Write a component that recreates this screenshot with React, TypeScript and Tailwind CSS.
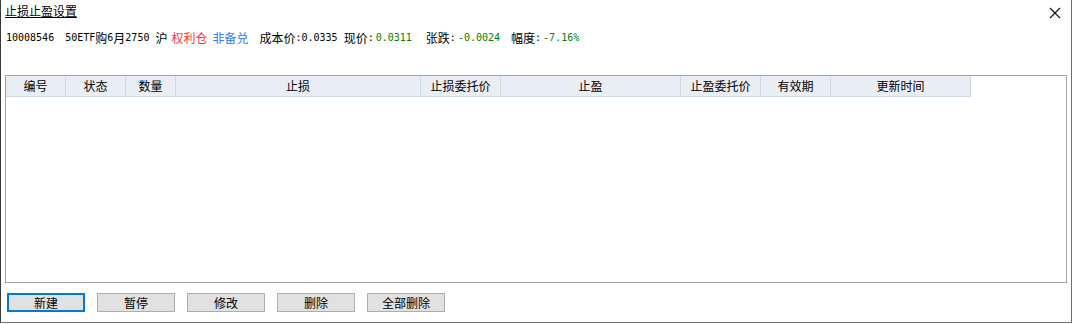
const cjk = { fontFamily: '"Noto Sans CJK SC", "Liberation Sans", sans-serif' }

const columns = [
    { label: "编号", w: "w-[60px]" },
    { label: "状态", w: "w-[60px]" },
    { label: "数量", w: "w-[50px]" },
    { label: "止损", w: "w-[245px]" },
    { label: "止损委托价", w: "w-[80px]" },
    { label: "止盈", w: "w-[180px]" },
    { label: "止盈委托价", w: "w-[80px]" },
    { label: "有效期", w: "w-[70px]" },
    { label: "更新时间", w: "w-[140px]" },
]

const buttons = ["新建", "暂停", "修改", "删除", "全部删除"]

const Num = ({ children, className = "" }: { children: string; className?: string }) => (
    <span className={`font-['DejaVu_Sans_Mono',monospace] text-[10px] ${className}`}>{children}</span>
)

export default function App() {
    return (
        <div className="w-[1073px] h-[324px] bg-white overflow-hidden text-black" style={cjk}>
            <div className="w-[1072px] h-[323px] border-l border-[#3a3a3a] border-r border-r-[#6e6e6e] border-b border-b-[#6e6e6e] flex flex-col">
                {/* title */}
                <div className="h-[26px] flex items-start justify-between pl-[4px] pr-[8px]">
                    <span className="text-[12px] leading-[14px] mt-[4px] underline underline-offset-[1px]">止损止盈设置</span>
                    <svg width="12" height="12" viewBox="0 0 12 12" className="mt-[7px] mr-[2px]">
                        <path d="M1 1 L11 11 M11 1 L1 11" stroke="#111" strokeWidth="1.1" />
                    </svg>
                </div>

                {/* info line */}
                <div className="h-[24px] flex items-center pl-[5px] text-[12px] leading-[14px] whitespace-nowrap">
                    <Num>10008546</Num>
                    <span className="ml-[11px] flex items-center">
                        <Num>50ETF</Num>购<Num>6</Num>月<Num>2750</Num>
                    </span>
                    <span className="ml-[6px]">沪</span>
                    <span className="ml-[4px] text-[#ff3333]">权利仓</span>
                    <span className="ml-[5px] text-[#3377ff]">非备兑</span>
                    <span className="ml-[11px]">成本价</span>
                    <Num>:0.0335</Num>
                    <span className="ml-[6px]">现价</span>
                    <Num>:</Num>
                    <Num className="text-[#008000] ml-[2px]">0.0311</Num>
                    <span className="ml-[14px]">张跌</span>
                    <Num>:</Num>
                    <Num className="text-[#008000] ml-[2px]">-0.0024</Num>
                    <span className="ml-[11px]">幅度</span>
                    <Num>:</Num>
                    <Num className="text-[#008000] ml-[2px]">-7.16%</Num>
                </div>

                {/* table frame */}
                <div className="mt-[25px] ml-[4px] w-[1062px] h-[208px] border border-[#a3a3a3]">
                    <div className="flex h-[21px]">
                        {columns.map((c) => (
                            <div
                                key={c.label}
                                className={`${c.w} h-[21px] bg-[#e9eef4] border-r border-b border-[#cdd8e4] flex items-center justify-center text-[12px]`}
                            >
                                {c.label}
                            </div>
                        ))}
                    </div>
                </div>

                {/* buttons */}
                <div className="mt-[10px] ml-[6px] flex gap-[12px]">
                    {buttons.map((b, i) => (
                        <button
                            key={b}
                            className={`w-[78px] h-[19px] bg-[#e1e1e1] text-[12px] leading-none flex items-center justify-center ${i === 0 ? "border-2 border-[#0078d7]" : "border border-[#adadad]"}`}
                        >
                            {b}
                        </button>
                    ))}
                </div>
            </div>
        </div>
    )
}
